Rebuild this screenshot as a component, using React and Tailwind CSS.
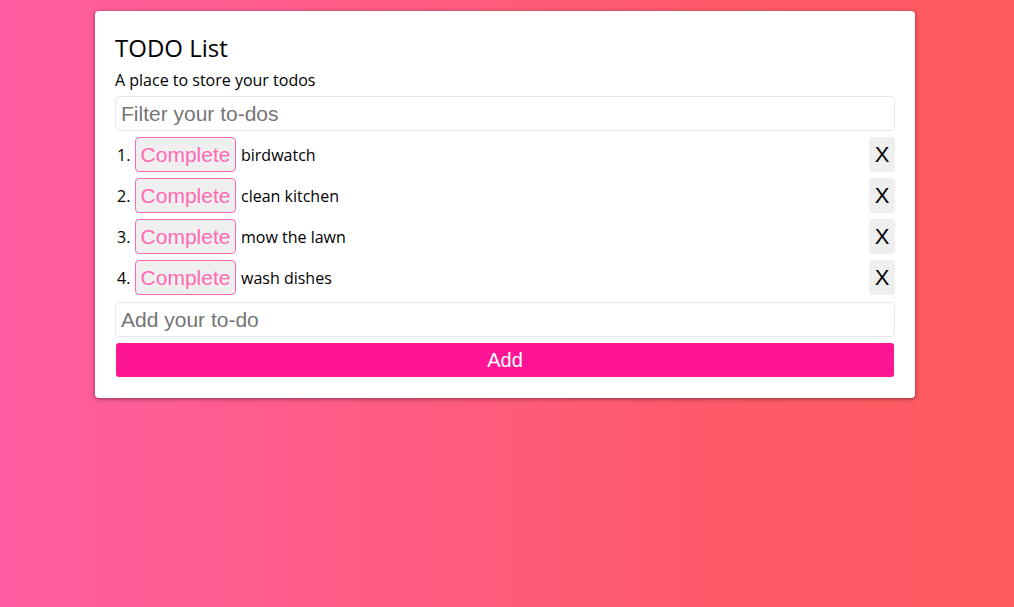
import React, { useState } from 'react'

const App = () => {
  const [todos, setTodos] = useState(['birdwatch', 'clean kitchen', 'mow the lawn', 'wash dishes'])
  const [filter, setFilter] = useState('')
  const [draft, setDraft] = useState('')

  const shown = todos.filter(t => t.includes(filter))

  return (
    <div className="min-h-screen w-full bg-[linear-gradient(90deg,#ff5ea2,#ff5a6a_70%,#ff5a5f)] pt-[11px] font-['Open_Sans',sans-serif]">
      <div className="ml-[95px] w-[820px] rounded-[4px] bg-white px-5 pt-[22px] pb-[21px] shadow-[0_1px_4px_rgba(0,0,0,0.45)]">
        {/* Header */}
        <h1 className="text-[24px] leading-[30px] text-black">TODO List</h1>
        <p className="mt-[7px] text-[16px] leading-[20px] text-black">A place to store your todos</p>

        {/* Filter */}
        <input
          value={filter}
          onChange={e => setFilter(e.target.value)}
          placeholder="Filter your to-dos"
          className="mt-[6px] block h-[35px] w-full rounded-[4px] border border-[#e8e8e8] px-[5px] font-['Liberation_Sans',Arial,sans-serif] text-[21px] text-black outline-none placeholder:text-[#757575]"
        />

        {/* List */}
        <ol className="mt-[6px] flex flex-col gap-[6px]">
          {shown.map((todo, i) => (
            <li key={todo} className="flex h-[35px] items-center">
              <span className="w-[20px] pl-[2px] text-[16px] text-black">{i + 1}.</span>
              <button className="h-[35px] w-[101px] rounded-[4px] border border-[#ff69b4] bg-[#efefef] font-['Liberation_Sans',Arial,sans-serif] text-[21px] text-[#ff69b4]">
                Complete
              </button>
              <span className="ml-[5px] flex-1 text-[16px] text-black">{todo}</span>
              <button
                onClick={() => setTodos(todos.filter(t => t !== todo))}
                className="h-[35px] w-[26px] rounded-[4px] bg-[#efefef] font-['Liberation_Sans',Arial,sans-serif] text-[22px] text-black"
              >
                X
              </button>
            </li>
          ))}
        </ol>

        {/* Add */}
        <input
          value={draft}
          onChange={e => setDraft(e.target.value)}
          placeholder="Add your to-do"
          className="mt-[7px] block h-[35px] w-full rounded-[4px] border border-[#e8e8e8] px-[5px] font-['Liberation_Sans',Arial,sans-serif] text-[21px] text-black outline-none placeholder:text-[#757575]"
        />
        <button
          onClick={() => {
            if (draft.trim()) {
              setTodos([...todos, draft.trim()])
              setDraft('')
            }
          }}
          className="mx-[1px] mt-[6px] block h-[34px] w-[778px] rounded-[3px] bg-[#ff1493] font-['Liberation_Sans',Arial,sans-serif] text-[20px] text-white"
        >
          Add
        </button>
      </div>
    </div>
  )
}

export default App
